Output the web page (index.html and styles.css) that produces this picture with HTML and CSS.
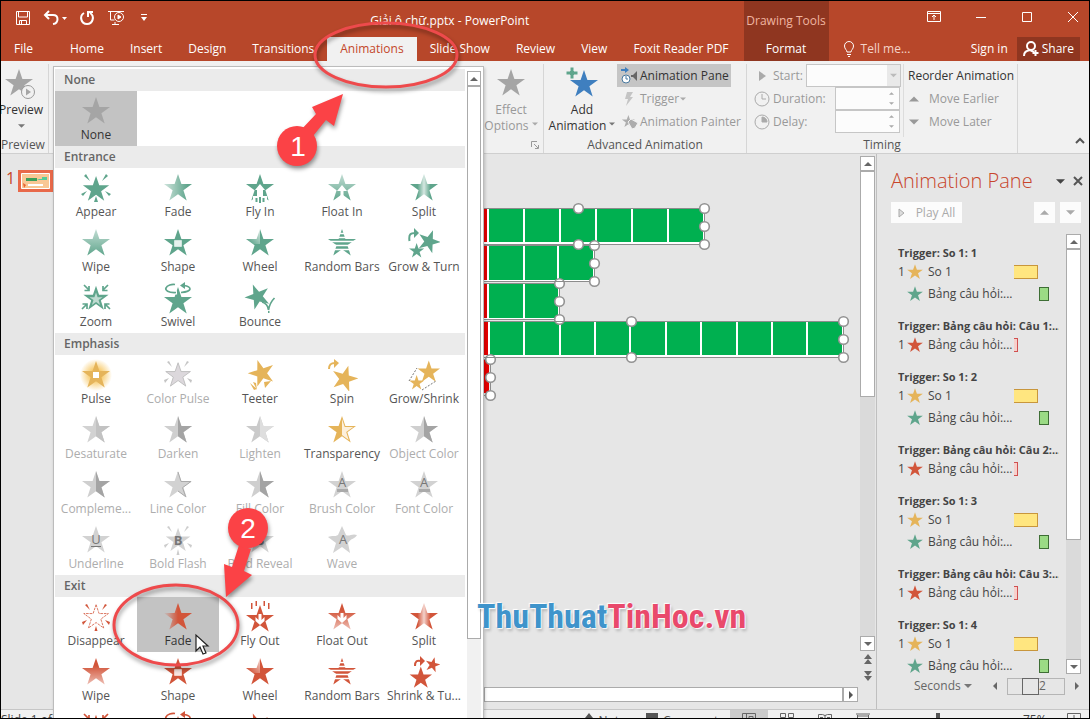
FILE: index.html
```html
<!DOCTYPE html>
<html lang="en">
<head>
<meta charset="utf-8">
<title>Giải ô chữ.pptx - PowerPoint</title>
<link rel="stylesheet" href="styles.css">
</head>
<body>
<svg class="sprite" aria-hidden="true">
  <defs>
    <linearGradient id="g-lr"><stop offset=".1" stop-color="#555"/><stop offset=".8" stop-color="#fff"/></linearGradient>
    <linearGradient id="g-out"><stop offset=".05" stop-color="#000"/><stop offset=".5" stop-color="#fff"/></linearGradient>
    <linearGradient id="g-tb" x2="0" y2="1"><stop offset="0" stop-color="#555"/><stop offset=".9" stop-color="#fff"/></linearGradient>
    <linearGradient id="g-bt" x2="0" y2="1"><stop offset=".3" stop-color="#fff"/><stop offset="1" stop-color="#444"/></linearGradient>
    <linearGradient id="g-split"><stop offset=".3" stop-color="#fff"/><stop offset=".5" stop-color="#444"/><stop offset=".7" stop-color="#fff"/></linearGradient>
    <linearGradient id="g-wheel" x1="0" y1="1" x2="1" y2="0"><stop offset=".2" stop-color="#fff"/><stop offset=".9" stop-color="#444"/></linearGradient>
    <radialGradient id="g-glow"><stop offset=".3" stop-color="#f7c65f"/><stop offset="1" stop-color="#f7c65f" stop-opacity="0"/></radialGradient>
    <mask id="m-lr"><rect width="32" height="32" fill="url(#g-lr)"/></mask>
    <mask id="m-out"><rect width="32" height="32" fill="url(#g-out)"/></mask>
    <mask id="m-tb"><rect width="32" height="32" fill="url(#g-tb)"/></mask>
    <mask id="m-bt"><rect width="32" height="32" fill="url(#g-bt)"/></mask>
    <mask id="m-split"><rect width="32" height="32" fill="url(#g-split)"/></mask>
    <mask id="m-wheel"><rect width="32" height="32" fill="#fff"/><rect width="16" height="17" fill="url(#g-wheel)"/></mask>
    <mask id="m-bars"><rect width="32" height="32" fill="#fff"/><path d="M10 6.500h12M10 10.500h12M0 14.500h32M0 18.500h32M0 22.500h32" stroke="#000" stroke-width="1.300"/></mask>
    <path id="st" d="M16 2l3.400 10H30l-8.600 6.300 3.300 10.200L16 22.200l-8.700 6.300 3.300-10.200L2 12h10.600z"/>
    <path id="half" d="M16 2l3.400 10H30l-8.600 6.300 3.300 10.200L16 22.200z"/>
  </defs>
  <symbol id="i-star" viewBox="0 0 32 32"><use href="#st"/></symbol>
  <symbol id="i-appear" viewBox="0 0 32 32"><use href="#st" transform="translate(1 2) scale(.94)"/><path d="M4 4l2-2 4 7zM28 4l-2-2-4 7zM1 22l6-3-4 5zM31 22l-6-3 4 5zM16 24l2 6h-4z"/></symbol>
  <symbol id="i-fade" viewBox="0 0 32 32"><use href="#st" mask="url(#m-lr)"/></symbol>
  <symbol id="i-fadeout" viewBox="0 0 32 32"><use href="#st" mask="url(#m-out)"/></symbol>
  <symbol id="i-flyin" viewBox="0 0 32 32"><use href="#st"/><path d="M16 12l5 6h-2v6h4v8H9v-8h4v-6h-2z" fill="#fff"/><path d="M11.500 26h2v4h-2zM15 25h2v6h-2zM18.500 26h2v4h-2z"/></symbol>
  <symbol id="i-flyout" viewBox="0 0 32 32"><use href="#st" transform="translate(0 2)"/><path d="M7 2h1.500v6H7zM11.500 0H13v5h-1.500zM19.500 0H21v5h-1.500zM24 2h1.500v6H24z"/><path d="M14.500 13h3v6l3-3v4L16 24l-4.500-4v-4l3 3z" fill="#fff"/></symbol>
  <symbol id="i-floatin" viewBox="0 0 32 32"><use href="#st" mask="url(#m-tb)"/><path d="M16 13l5 6h-3.500v6h-3v-6H11z" fill="#fff"/></symbol>
  <symbol id="i-floatout" viewBox="0 0 32 32"><use href="#st" mask="url(#m-bt)"/><path d="M14.500 12h3v5l3-3v4L16 22l-4.500-4v-4l3 3z" fill="#fff"/></symbol>
  <symbol id="i-split" viewBox="0 0 32 32"><use href="#st" mask="url(#m-split)"/></symbol>
  <symbol id="i-wipe" viewBox="0 0 32 32"><use href="#st" mask="url(#m-tb)"/></symbol>
  <symbol id="i-wipeout" viewBox="0 0 32 32"><use href="#st" mask="url(#m-bt)"/></symbol>
  <symbol id="i-shape" viewBox="0 0 32 32"><use href="#st"/><path d="M12.500 13.500h7v6h-7z" fill="#fff" fill-opacity=".85" stroke="#fff" stroke-opacity=".5"/></symbol>
  <symbol id="i-wheel" viewBox="0 0 32 32"><use href="#st" mask="url(#m-wheel)"/></symbol>
  <symbol id="i-bars" viewBox="0 0 32 32"><use href="#st" mask="url(#m-bars)"/></symbol>
  <symbol id="i-growturn" viewBox="0 0 32 32"><use href="#st" transform="translate(8 1) rotate(20 13 13) scale(.82)"/><use href="#st" transform="translate(0 15) scale(.54)"/><path d="M1.500 14c-1-7 1-8 6-8" fill="none" stroke="currentColor" stroke-width="2"/><path d="M6 1l5 5-5 5z"/></symbol>
  <symbol id="i-shrinkturn" viewBox="0 0 32 32"><use href="#st" transform="translate(0 9) scale(.8)"/><use href="#st" transform="translate(16 0) rotate(14 9 9) scale(.54)"/><path d="M7 10c0-5 2-6 6-5" fill="none" stroke="currentColor" stroke-width="2"/><path d="M12 0l5 5-5 5z"/></symbol>
  <symbol id="i-zoom" viewBox="0 0 32 32"><use href="#st" transform="translate(1.600 2) scale(.9)"/><use href="#st" transform="translate(8.500 9.500) scale(.47)" fill="#fff" fill-opacity=".6"/><path d="M4 3l5 5M9 4v4.500H4.500M28 3l-5 5M23 4v4.500h4.500M2 27l5-5M2.500 22H7v5M30 27l-5-5M29.500 22H25v5" fill="none" stroke="currentColor" stroke-width="1.700"/></symbol>
  <symbol id="i-swivel" viewBox="0 0 32 32"><use href="#st" transform="translate(0 3)"/><path d="M15 10.500C6 11 3 8 4 6c1-3 8-4 13-3M21 10c8-1 9-5 3-6" fill="none" stroke="#fff" stroke-width="4"/><path d="M14 10.500C6 11 3 8 4 6c1-3 6-4 9-3.500M19 10.500c12-1 11-6 3-7" fill="none" stroke="currentColor" stroke-width="1.700"/><path d="M23 0v7l-5-3.500z"/></symbol>
  <symbol id="i-bounce" viewBox="0 0 32 32"><use href="#st" transform="translate(-1 0) rotate(-22 14 14) scale(.9)"/><path d="M18 20c4 1 6 4 6.500 8 1-6 3-9 6-12" fill="none" stroke="currentColor" stroke-width="1.700"/><path d="M24 29h1.500v2H24z"/></symbol>
  <symbol id="i-pulse" viewBox="0 0 32 32"><circle cx="16" cy="16" r="16" fill="url(#g-glow)"/><use href="#st"/><path d="M13 13h6v6h-6z" fill="#fff"/></symbol>
  <symbol id="i-colorpulse" viewBox="0 0 32 32"><use href="#st" fill="#dcd8dc" stroke="#bbb" transform="translate(2 2) scale(.88)"/><path d="M5 3l2-1 3 6zM27 3l-2-1-3 6zM2 21l5-2-4 5zM30 21l-5-2 4 5z"/></symbol>
  <symbol id="i-teeter" viewBox="0 0 32 32"><use href="#st" transform="translate(2 -1) rotate(-18 14 14) scale(.95)"/><path d="M6 24l7 6-3 1zM27 22l-6 7-1-6zM13 31l-1-7-3-1z"/></symbol>
  <symbol id="i-spin" viewBox="0 0 32 32"><use href="#st" transform="translate(4 4) rotate(16 14 14) scale(.94)"/><path d="M3 10c0-5 2-6 6-6" fill="none" stroke="currentColor" stroke-width="2"/><path d="M8 0l5 4-5 5z"/></symbol>
  <symbol id="i-growshrink" viewBox="0 0 32 32"><use href="#st" transform="translate(8 0) scale(.8)"/><use href="#st" transform="translate(0 15) scale(.54)"/><path d="M1 22L9 9M14 31l14-9" stroke="#777" fill="none" stroke-dasharray="2 1.500"/></symbol>
  <symbol id="i-desat" viewBox="0 0 32 32"><use href="#st" fill="#d2d2d2"/><use href="#half" fill="#c2c2c2"/></symbol>
  <symbol id="i-dark" viewBox="0 0 32 32"><use href="#st" fill="#cfcfcf"/><use href="#half" fill="#a4a4a4"/></symbol>
  <symbol id="i-light" viewBox="0 0 32 32"><use href="#st" fill="#cacaca"/><use href="#half" fill="#dedede"/></symbol>
  <symbol id="i-line" viewBox="0 0 32 32"><use href="#st" fill="#d2d2d2"/><path d="M16 3l3 9.500h10l-8.500 6.200 3.200 9L16 22" fill="none" stroke="#aaa"/></symbol>
  <symbol id="i-transp" viewBox="0 0 32 32"><use href="#st"/><path d="M16 5l2.700 8h8.500l-7 5 2.500 8L16 21z" fill="#fdf0dc"/></symbol>
  <symbol id="i-brush" viewBox="0 0 32 32"><use href="#st" fill="#d2d2d2"/><path d="M11 20h11v3H11z" fill="#aaa"/><text x="16" y="18" text-anchor="middle" class="glyph">A</text></symbol>
  <symbol id="i-under" viewBox="0 0 32 32"><use href="#st" fill="#d2d2d2"/><text x="16" y="20" text-anchor="middle" class="glyph">U</text><path d="M11 22h10v1H11z" fill="#777"/></symbol>
  <symbol id="i-flash" viewBox="0 0 32 32"><use href="#st" fill="#d2d2d2" transform="translate(2 2) scale(.88)"/><path d="M5 3l2-1 3 6zM27 3l-2-1-3 6zM2 21l5-2-4 5zM30 21l-5-2 4 5zM16 25l1.500 6h-3z" fill="#ccc"/><text x="16" y="21" text-anchor="middle" class="glyph bold">B</text></symbol>
  <symbol id="i-reveal" viewBox="0 0 32 32"><use href="#st" fill="#d2d2d2"/><text x="16" y="21" text-anchor="middle" class="glyph bold">B</text></symbol>
  <symbol id="i-wave" viewBox="0 0 32 32"><path d="M16 2l4 9c3 2 6-2 11 0-2 4-6 3-9 8l2 10-8-6-9 6 3-10-8-6c4-2 7 0 10-2z" fill="#d2d2d2"/><text x="17" y="20" text-anchor="middle" class="glyph">A</text></symbol>
  <symbol id="i-disappear" viewBox="0 0 32 32"><use href="#st" fill="#fff" stroke="currentColor" stroke-width=".9" stroke-dasharray="3 1" transform="translate(2 2) scale(.88)"/><path d="M5 4l2-1 3 6zM27 4l-2-1-3 6zM2 21l5-2-4 5zM30 21l-5-2 4 5zM16 25l1.500 5h-3z"/></symbol>
  <symbol id="i-down" viewBox="0 0 8 8"><path d="M0 2h8L4 6z"/></symbol>
  <symbol id="i-up" viewBox="0 0 8 8"><path d="M0 6h8L4 2z"/></symbol>
  <symbol id="i-right" viewBox="0 0 8 8"><path d="M2 0v8l4-4z"/></symbol>
  <symbol id="i-left" viewBox="0 0 8 8"><path d="M6 0v8L2 4z"/></symbol>
</svg>

<div class="app">
  <header class="header">
    <div class="header-main">
      <div class="titlebar">
        <div class="qat">
          <button aria-label="Save"><svg width="16" height="16" viewBox="0 0 16 16" class="line"><path d="M1.500 1.500h13v13h-13zM3.500 2v5h9V2M4.500 14.500v-4h7v4M6.500 11v3"/></svg></button>
          <button aria-label="Undo"><svg width="24" height="16" viewBox="0 0 24 16" class="line thick"><path d="M2 5h8c6 0 6 8 0 9M6 1L2 5l4 4"/><path d="M19 7h5l-2.500 3z" fill="#fff" stroke="none"/></svg></button>
          <button aria-label="Redo"><svg width="16" height="16" viewBox="0 0 16 16" class="line thick"><path d="M5 3C0 6 2 14 8 14s8-8 3-11M9 7V2h5"/></svg></button>
          <button aria-label="Start from beginning"><svg width="18" height="16" viewBox="0 0 18 16" class="line"><path d="M1 1.500h16M3.500 2v8h4M8 12v2M5 14.500h7"/><circle cx="12" cy="7" r="4.500"/><path d="M11 5l3 2-3 2z" fill="#fff"/></svg></button>
          <button class="customize" aria-label="Customize Quick Access Toolbar"><svg width="8" height="8" viewBox="0 0 8 8"><path d="M1 0h6v1H1zM1 3h6L4 7z"/></svg></button>
        </div>
        <h1 class="doc-title">Giải ô chữ.pptx - PowerPoint</h1>
      </div>
      <nav class="tabs">
        <button class="tab file">File</button><button class="tab">Home</button><button class="tab">Insert</button><button class="tab">Design</button><button class="tab">Transitions</button><button class="tab active">Animations</button><button class="tab">Slide Show</button><button class="tab">Review</button><button class="tab">View</button><button class="tab">Foxit Reader PDF</button>
      </nav>
    </div>
    <div class="context">
      <span class="context-title">Drawing Tools</span>
      <button class="tab">Format</button>
    </div>
    <div class="header-side">
      <div class="window-controls">
        <button aria-label="Ribbon Display Options"><svg width="14" height="12" viewBox="0 0 14 12" class="line"><path d="M.5.500h13v10H.5zM.5 2.500h13M7 9V4M5 6l2-2 2 2"/></svg></button>
        <button aria-label="Minimize"><svg width="12" height="12" viewBox="0 0 12 12" class="line"><path d="M1 6.500h10"/></svg></button>
        <button aria-label="Restore"><svg width="12" height="12" viewBox="0 0 12 12" class="line"><path d="M1.500 1.500h9v9h-9z"/></svg></button>
        <button aria-label="Close"><svg width="12" height="12" viewBox="0 0 12 12" class="line"><path d="M1 1l10 10M11 1L1 11"/></svg></button>
      </div>
      <div class="account">
        <button class="tell"><svg width="12" height="16" viewBox="0 0 12 16" class="line"><path d="M4 11c0-2-2.500-3-2.500-6a4.500 4.500 0 019 0c0 3-2.500 4-2.500 6zM4 13.500h4M5 15.500h2"/></svg>Tell me...</button>
        <button class="signin">Sign in</button>
        <button class="share"><svg width="16" height="16" viewBox="0 0 16 16" class="line share-icon"><circle cx="8" cy="5" r="4"/><path d="M1 15c0-4 2-5 6-6l4 2M12.500 9v6M9.500 12h6"/></svg>Share</button>
      </div>
    </div>
  </header>

  <section class="ribbon">
    <div class="group preview">
      <div class="group-body">
        <button class="big"><svg width="32" height="32" viewBox="0 0 32 32" class="gray"><use href="#st" transform="translate(-2 0)"/><circle cx="23" cy="25" r="6.500" fill="#f1f1f1" stroke="#999"/><path d="M21 21.500v7l5-3.500z"/></svg><span>Preview</span><svg class="caret" width="7" height="16"><use href="#i-down" width="7" height="16"/></svg></button>
      </div>
      <div class="group-label">Preview</div>
    </div>
    <div class="group slot">
      <div class="gallery">
        <div class="gallery-list">
          <h2>None</h2>
          <div class="grid gray"><button class="fx on"><svg><use href="#i-star"/></svg><span>None</span></button></div>
          <h2>Entrance</h2>
          <div class="grid green">
            <button class="fx"><svg><use href="#i-appear"/></svg><span>Appear</span></button>
            <button class="fx"><svg><use href="#i-fade"/></svg><span>Fade</span></button>
            <button class="fx"><svg><use href="#i-flyin"/></svg><span>Fly In</span></button>
            <button class="fx"><svg><use href="#i-floatin"/></svg><span>Float In</span></button>
            <button class="fx"><svg><use href="#i-split"/></svg><span>Split</span></button>
            <button class="fx"><svg><use href="#i-wipe"/></svg><span>Wipe</span></button>
            <button class="fx"><svg><use href="#i-shape"/></svg><span>Shape</span></button>
            <button class="fx"><svg><use href="#i-wheel"/></svg><span>Wheel</span></button>
            <button class="fx"><svg><use href="#i-bars"/></svg><span>Random Bars</span></button>
            <button class="fx"><svg><use href="#i-growturn"/></svg><span>Grow &amp; Turn</span></button>
            <button class="fx"><svg><use href="#i-zoom"/></svg><span>Zoom</span></button>
            <button class="fx"><svg><use href="#i-swivel"/></svg><span>Swivel</span></button>
            <button class="fx"><svg><use href="#i-bounce"/></svg><span>Bounce</span></button>
          </div>
          <h2>Emphasis</h2>
          <div class="grid gold">
            <button class="fx"><svg><use href="#i-pulse"/></svg><span>Pulse</span></button>
            <button class="fx" disabled><svg><use href="#i-colorpulse"/></svg><span>Color Pulse</span></button>
            <button class="fx"><svg><use href="#i-teeter"/></svg><span>Teeter</span></button>
            <button class="fx"><svg><use href="#i-spin"/></svg><span>Spin</span></button>
            <button class="fx"><svg><use href="#i-growshrink"/></svg><span>Grow/Shrink</span></button>
            <button class="fx" disabled><svg><use href="#i-desat"/></svg><span>Desaturate</span></button>
            <button class="fx" disabled><svg><use href="#i-dark"/></svg><span>Darken</span></button>
            <button class="fx" disabled><svg><use href="#i-light"/></svg><span>Lighten</span></button>
            <button class="fx"><svg><use href="#i-transp"/></svg><span>Transparency</span></button>
            <button class="fx" disabled><svg><use href="#i-dark"/></svg><span>Object Color</span></button>
            <button class="fx" disabled><svg><use href="#i-dark"/></svg><span>Compleme...</span></button>
            <button class="fx" disabled><svg><use href="#i-line"/></svg><span>Line Color</span></button>
            <button class="fx" disabled><svg><use href="#i-dark"/></svg><span>Fill Color</span></button>
            <button class="fx" disabled><svg><use href="#i-brush"/></svg><span>Brush Color</span></button>
            <button class="fx" disabled><svg><use href="#i-brush"/></svg><span>Font Color</span></button>
            <button class="fx" disabled><svg><use href="#i-under"/></svg><span>Underline</span></button>
            <button class="fx" disabled><svg><use href="#i-flash"/></svg><span>Bold Flash</span></button>
            <button class="fx" disabled><svg><use href="#i-reveal"/></svg><span>Bold Reveal</span></button>
            <button class="fx" disabled><svg><use href="#i-wave"/></svg><span>Wave</span></button>
          </div>
          <h2>Exit</h2>
          <div class="grid red">
            <button class="fx"><svg><use href="#i-disappear"/></svg><span>Disappear</span></button>
            <button class="fx on"><svg><use href="#i-fadeout"/></svg><span>Fade</span></button>
            <button class="fx"><svg><use href="#i-flyout"/></svg><span>Fly Out</span></button>
            <button class="fx"><svg><use href="#i-floatout"/></svg><span>Float Out</span></button>
            <button class="fx"><svg><use href="#i-split"/></svg><span>Split</span></button>
            <button class="fx"><svg><use href="#i-wipeout"/></svg><span>Wipe</span></button>
            <button class="fx"><svg><use href="#i-shape"/></svg><span>Shape</span></button>
            <button class="fx"><svg><use href="#i-wheel"/></svg><span>Wheel</span></button>
            <button class="fx"><svg><use href="#i-bars"/></svg><span>Random Bars</span></button>
            <button class="fx"><svg><use href="#i-shrinkturn"/></svg><span>Shrink &amp; Tu...</span></button>
            <button class="fx" aria-label="Zoom"><svg><use href="#i-zoom"/></svg></button>
            <button class="fx" aria-label="Swivel"><svg><use href="#i-swivel"/></svg></button>
            <button class="fx" aria-label="Bounce"><svg><use href="#i-bounce"/></svg></button>
          </div>
        </div>
        <div class="scroll gallery-scroll"><button aria-label="Scroll up"><svg width="8" height="8"><use href="#i-up"/></svg></button><div class="thumb"></div></div>
      </div>
    </div>
    <div class="group effect">
      <div class="group-body">
        <button class="big" disabled><svg width="32" height="32" class="gray"><use href="#i-star"/></svg><span>Effect</span><span>Options <svg class="caret" width="6" height="6"><use href="#i-down"/></svg></span></button>
      </div>
      <div class="group-label launcher"><svg width="8" height="8" viewBox="0 0 8 8"><path d="M.5 6V.500H6M3 3l4 4M7.500 4v3.500H4" fill="none" stroke="#999"/></svg></div>
    </div>
    <div class="group advanced">
      <div class="group-body">
        <button class="big"><svg width="32" height="32" viewBox="0 0 32 32"><use href="#st" fill="#3f7fbf" transform="translate(2 1)"/><path d="M4 0h4v4h4v4H8v4H4V8H0V4h4z" fill="#5fa58c" stroke="#f1f1f1"/></svg><span>Add</span><span>Animation <svg class="caret" width="6" height="6"><use href="#i-down"/></svg></span></button>
        <div class="rows">
          <button class="row pressed"><svg width="18" height="18" viewBox="0 0 18 18"><circle cx="5" cy="12" r="4" fill="#fff" stroke="#49799f"/><path d="M5 9v3h2" fill="none" stroke="#49799f"/><path d="M0 2h4V0l4 3-4 3V4H0z" fill="#3f7fbf"/><path d="M10 8h2l4-4v10l-4-4h-2z" fill="#666"/></svg>Animation Pane</button>
          <button class="row" disabled><svg width="18" height="18" viewBox="0 0 18 18"><path d="M6 2h6L9 7h3l-7 9 2-7H4z" fill="#c4c4c4"/></svg>Trigger <svg class="caret" width="6" height="6"><use href="#i-down"/></svg></button>
          <button class="row" disabled><svg width="18" height="18" viewBox="0 0 18 18"><g fill="#adadad"><use href="#st" transform="translate(0 1) scale(.46)"/><path d="M7 9l3-3 7 4-3 5-3 1z" stroke="#f1f1f1"/></g></svg>Animation Painter</button>
        </div>
      </div>
      <div class="group-label">Advanced Animation</div>
    </div>
    <div class="group timing">
      <div class="group-body">
        <div class="fields">
          <div class="field"><svg width="16" height="16" viewBox="0 0 16 16"><path d="M5 3v10l7-5z" fill="#aaa"/></svg><label for="start">Start:</label><span class="box wide"><select id="start" disabled><option></option></select><svg class="drop" width="6" height="6"><use href="#i-down"/></svg></span></div>
          <div class="field"><svg class="clock" width="16" height="16" viewBox="0 0 16 16"><circle cx="8" cy="8" r="7"/><path d="M8 3v5h4"/></svg><label for="duration">Duration:</label><span class="box"><input id="duration" disabled><span class="spin"><svg width="5" height="5"><use href="#i-up"/></svg><svg width="5" height="5"><use href="#i-down"/></svg></span></span></div>
          <div class="field"><svg class="clock" width="16" height="16" viewBox="0 0 16 16"><circle cx="8" cy="8" r="7"/><path d="M8 3v5h5a5 5 0 00-5-5z" fill="#aaa"/></svg><label for="delay">Delay:</label><span class="box"><input id="delay" disabled><span class="spin"><svg width="5" height="5"><use href="#i-up"/></svg><svg width="5" height="5"><use href="#i-down"/></svg></span></span></div>
        </div>
        <div class="reorder">
          <span class="row">Reorder Animation</span>
          <button class="row" disabled><svg width="10" height="10"><use href="#i-up"/></svg>Move Earlier</button>
          <button class="row" disabled><svg width="10" height="10"><use href="#i-down"/></svg>Move Later</button>
        </div>
      </div>
      <div class="group-label">Timing</div>
    </div>
    <button class="collapse" aria-label="Collapse the Ribbon"><svg width="10" height="8" viewBox="0 0 10 8"><path d="M1 6l4-4 4 4" fill="none" stroke="#555" stroke-width="2"/></svg></button>
  </section>

  <main class="workspace">
    <aside class="slides">
      <span class="slide-no">1</span>
      <svg width="36" height="22" viewBox="0 0 36 22"><path d="M0 0h36v22H0z" fill="#e8694a"/><path d="M3.500 3.500h28v15h-28z" fill="#f9c795" stroke="#fff"/><path d="M8 8h11v3H8z" fill="#3ba05a"/><path d="M19 9h5V7h5v3h-8z" fill="#5c9"/><path d="M10 14h15v2H10z" fill="#fff"/><path d="M5 13l3 2-2 3z" fill="#e86030"/></svg>
    </aside>
    <div class="stage">
      <div class="canvas">
        <svg class="shapes" width="380" height="250" viewBox="484 154 380 250">
          <g fill="#fff"><path d="M484 208h220v36H484zM484 245h110v36H484zM484 283h75v36H484zM484 321h359v36H484z"/></g>
          <g fill="#e60000"><path d="M484 209h3v33h-3zM484 246h3v34h-3zM484 284h3v34h-3zM484 322h4v33h-4zM484 359h5v34h-5z"/></g>
          <g fill="#00b050"><path d="M489 209h34v33h-34zM525 209h34v33h-34zM561 209h34v33h-34zM597 209h34v33h-34zM633 209h34v33h-34zM669 209h34v33h-34z"/><path d="M489 246h34v34h-34zM525 246h32v34h-32zM559 246h34v34h-34z"/><path d="M489 284h34v34h-34zM525 284h33v34h-33z"/><path d="M490 322h33v33h-33zM525 322h34v33h-34zM561 322h33v33h-33zM596 322h33v33h-33zM631 322h34v33h-34zM667 322h33v33h-33zM702 322h34v33h-34zM738 322h33v33h-33zM773 322h33v33h-33zM808 322h34v33h-34z"/></g>
          <path d="M484 208.500h220.500v36H484M484 245.500h110.500v36H484M484 283.500h75.500v36H484M484 321.500h359.500v36H484M484 359.500h6.500v36H484" fill="none" stroke="#8c8c8c"/>
          <g fill="#fff" stroke="#929292" stroke-width="1.600"><circle cx="578.500" cy="208.500" r="4.800"/><circle cx="578.500" cy="244.500" r="4.800"/><circle cx="704.500" cy="208.500" r="4.800"/><circle cx="704.500" cy="226.500" r="4.800"/><circle cx="704.500" cy="244.500" r="4.800"/><circle cx="594.500" cy="245.500" r="4.800"/><circle cx="594.500" cy="263.500" r="4.800"/><circle cx="594.500" cy="281.500" r="4.800"/><circle cx="559.500" cy="283.500" r="4.800"/><circle cx="559.500" cy="301.500" r="4.800"/><circle cx="559.500" cy="319.500" r="4.800"/><circle cx="631.500" cy="321.500" r="4.800"/><circle cx="631.500" cy="357.500" r="4.800"/><circle cx="843.500" cy="321.500" r="4.800"/><circle cx="843.500" cy="339.500" r="4.800"/><circle cx="843.500" cy="357.500" r="4.800"/><circle cx="490.500" cy="359.500" r="4.800"/><circle cx="490.500" cy="377.500" r="4.800"/><circle cx="490.500" cy="395.500" r="4.800"/></g>
          <path d="M590 244.500h9M554 281.500h10M554 321.500h10M484 357.500h11" stroke="#8c8c8c"/>
        </svg>
      </div>
      <div class="hscroll"><div class="hthumb"></div><button aria-label="Scroll right"><svg width="8" height="8"><use href="#i-right"/></svg></button></div>
    </div>
    <div class="vbar">
      <div class="scroll vscroll"><button aria-label="Scroll up"><svg width="8" height="8"><use href="#i-up"/></svg></button><div class="thumb"></div><div class="track"></div><button aria-label="Scroll down"><svg width="8" height="8"><use href="#i-down"/></svg></button></div>
      <button class="jump" aria-label="Previous Slide"><svg width="10" height="10" viewBox="0 0 10 10"><path d="M1 5h8L5 0zM1 10h8L5 5z"/></svg></button>
      <button class="jump" aria-label="Next Slide"><svg width="10" height="10" viewBox="0 0 10 10"><path d="M1 0h8L5 5zM1 5h8l-4 5z"/></svg></button>
    </div>
    <aside class="pane">
      <div class="pane-head"><h2>Animation Pane</h2><button aria-label="Task Pane Options"><svg width="9" height="9"><use href="#i-down"/></svg></button><button aria-label="Close"><svg width="10" height="10" viewBox="0 0 10 10"><path d="M1 1l8 8M9 1L1 9" stroke="#555" stroke-width="2"/></svg></button></div>
      <div class="pane-tools"><button class="play" disabled><svg width="8" height="10" viewBox="0 0 8 10"><path d="M1 1v8l5-4z" fill="#ddd" stroke="#aaa"/></svg>Play All</button><button class="move" aria-label="Move up" disabled><svg width="9" height="9"><use href="#i-up"/></svg></button><button class="move" aria-label="Move down" disabled><svg width="9" height="9"><use href="#i-down"/></svg></button></div>
      <div class="pane-body">
        <div class="effects">
          <section><h3>Trigger: So 1: 1</h3>
            <div class="effect-row"><span>1</span><svg class="gold"><use href="#i-star"/></svg><span>So 1</span><i class="bar yellow"></i></div>
            <div class="effect-row"><span></span><svg class="green"><use href="#i-star"/></svg><span>Bảng câu hỏi:...</span><i class="bar lime"></i></div></section>
          <section><h3>Trigger: Bảng câu hỏi: Câu 1:...</h3>
            <div class="effect-row"><span>1</span><svg class="red"><use href="#i-star"/></svg><span>Bảng câu hỏi:...</span><i class="bar rose"></i></div></section>
          <section><h3>Trigger: So 1: 2</h3>
            <div class="effect-row"><span>1</span><svg class="gold"><use href="#i-star"/></svg><span>So 1</span><i class="bar yellow"></i></div>
            <div class="effect-row"><span></span><svg class="green"><use href="#i-star"/></svg><span>Bảng câu hỏi:...</span><i class="bar lime"></i></div></section>
          <section><h3>Trigger: Bảng câu hỏi: Câu 2:...</h3>
            <div class="effect-row"><span>1</span><svg class="red"><use href="#i-star"/></svg><span>Bảng câu hỏi:...</span><i class="bar rose"></i></div></section>
          <section><h3>Trigger: So 1: 3</h3>
            <div class="effect-row"><span>1</span><svg class="gold"><use href="#i-star"/></svg><span>So 1</span><i class="bar yellow"></i></div>
            <div class="effect-row"><span></span><svg class="green"><use href="#i-star"/></svg><span>Bảng câu hỏi:...</span><i class="bar lime"></i></div></section>
          <section><h3>Trigger: Bảng câu hỏi: Câu 3:...</h3>
            <div class="effect-row"><span>1</span><svg class="red"><use href="#i-star"/></svg><span>Bảng câu hỏi:...</span><i class="bar rose"></i></div></section>
          <section><h3>Trigger: So 1: 4</h3>
            <div class="effect-row"><span>1</span><svg class="gold"><use href="#i-star"/></svg><span>So 1</span><i class="bar yellow"></i></div>
            <div class="effect-row"><span></span><svg class="green"><use href="#i-star"/></svg><span>Bảng câu hỏi:...</span><i class="bar lime"></i></div></section>
        </div>
        <div class="scroll pane-scroll"><button aria-label="Scroll up"><svg width="8" height="8"><use href="#i-up"/></svg></button><div class="thumb"></div><div class="track"></div><button aria-label="Scroll down"><svg width="8" height="8"><use href="#i-down"/></svg></button></div>
      </div>
      <div class="timeline"><button>Seconds <svg class="caret" width="8" height="8"><use href="#i-down"/></svg></button><svg width="8" height="8"><use href="#i-left"/></svg><div class="ruler"><span class="knob"></span><span>2</span></div><svg width="8" height="8"><use href="#i-right"/></svg></div>
    </aside>
  </main>

  <footer class="status">
    <div class="status-inner">
      <span class="slide-count">Slide 1 of 1</span>
      <button class="notes"><svg width="10" height="12" viewBox="0 0 10 12"><path d="M1 5h8L5 0zM0 7h10v1H0z"/></svg>Notes</button>
      <button class="comments"><svg width="12" height="12" viewBox="0 0 12 12"><path d="M0 0h12v9H6l-3 3V9H0z"/></svg>Comments</button>
      <button class="view on" aria-label="Normal"><svg width="14" height="12" viewBox="0 0 14 12"><path d="M.5.500h13v11H.5zM4.500 1v10M7 3.500h4v4H7z"/></svg></button>
      <button class="view" aria-label="Slide Sorter"><svg width="14" height="12" viewBox="0 0 14 12"><path d="M.5.500h5v4h-5zM8.500.500h5v4h-5zM.5 7.500h5v4h-5zM8.500 7.500h5v4h-5z"/></svg></button>
      <button class="view" aria-label="Reading View"><svg width="14" height="12" viewBox="0 0 14 12"><path d="M.5 1.500h4l2.500 1 2.500-1h4v9h-13zM7 2v9M2 4.500h3M9 4.500h3M2 6.500h3"/></svg></button>
      <button class="view" aria-label="Slide Show"><svg width="14" height="12" viewBox="0 0 14 12"><path d="M0 1h14M1.500 2v6h11V2M7 8v4M2 3h10"/></svg></button>
      <label class="zoom"><input type="range" min="0" max="100" value="38" aria-label="Zoom"></label>
      <span class="percent">75%</span>
      <button class="fit" aria-label="Fit slide"><svg width="14" height="12" viewBox="0 0 14 12"><path d="M.5.500h13v11H.5zM7 2v8M3 6h8"/></svg></button>
    </div>
  </footer>

  <div class="watermark"><span class="wm-blue">ThuThuat</span><span class="wm-pink">TinHoc.vn</span></div>
  <svg class="callouts" width="484" height="718" viewBox="0 0 484 718">
    <g class="shadowed"><ellipse cx="386" cy="55" rx="71" ry="32" class="ring"/><ellipse cx="176" cy="625" rx="62" ry="40" class="ring"/></g>
    <g class="shadowed" fill="#fb4246"><path d="M343 94l-9 32-8-6-17 21-10-9 17-18-4-7z"/><circle cx="297" cy="146" r="20"/><path d="M226 597l-2-33 8 3 7-22 12 4-7 22 8 4z"/><circle cx="248" cy="528" r="20"/></g>
    <g class="digits"><text x="298" y="156">1</text><text x="248" y="538">2</text></g>
    <path d="M196 635v16l4-4 3 7 3-1-3-7h5z" fill="#fff" stroke="#222" stroke-width="1.200"/>
  </svg>
</div>
</body>
</html>
```
FILE: styles.css
```css
* { box-sizing: border-box; }
html, body { height: 100%; }
body { margin: 0; font: 12px/16px "Open Sans", "Noto Sans", sans-serif; color: #444; }
h1, h2, h3 { margin: 0; font: inherit; }
button { margin: 0; padding: 0; border: 0; background: none; font: inherit; color: inherit; text-align: center; white-space: nowrap; }
svg { flex: none; fill: currentColor; }
.sprite { position: absolute; width: 0; height: 0; }
.line { fill: none; stroke: #fff; }
.thick { stroke-width: 2; }
.clock { fill: none; stroke: #aaa; }
.gray { color: #a5a5a5; }
.green { color: #5fa58c; }
.gold { color: #e5b45a; }
.red { color: #d2553a; }
.glyph { font: 13px "Open Sans", sans-serif; fill: #777; }
.bold { font-weight: 700; }

.app { position: relative; display: flex; flex-direction: column; height: 100vh; border: 1px solid #000; overflow: hidden; background: #e6e6e6; }

/* Title bar and tabs */
.header { flex: none; display: flex; height: 60px; background: #b7472a; color: #fff; }
.header-main { flex: 0 0 740px; display: flex; flex-direction: column; }
.titlebar { flex: 1; display: flex; align-items: center; }
.qat { display: flex; align-items: center; gap: 12px; width: 155px; padding: 0 0 3px 14px; }
.qat button { display: flex; }
.qat .customize { margin-left: 3px; }
.doc-title { flex: 1; padding-top: 4px; text-align: center; }
.tabs { display: flex; justify-content: space-between; height: 24px; padding-right: 2px; }
.tab { height: 24px; padding: 0 13px; line-height: 24px; }
.tab.file { width: 56px; text-align: left; }
.tab.active { background: #f1f1f1; color: #c4472a; }
.context { flex: 0 0 85px; display: flex; flex-direction: column; justify-content: space-between; background: #8f3620; text-align: center; }
.context-title { padding-top: 12px; color: #f0b5a0; white-space: nowrap; }
.header-side { flex: 1; display: flex; flex-direction: column; justify-content: space-between; }
.window-controls { display: flex; justify-content: flex-end; gap: 34px; padding: 10px 10px 0 0; }
.window-controls button { display: flex; }
.account { display: flex; height: 24px; padding-right: 9px; }
.account button { display: flex; align-items: center; }
.tell { gap: 6px; padding-left: 14px; color: #f4d3c8; }
.account .signin { margin-left: auto; padding: 0 9px; }
.account .share { gap: 3px; padding: 0 6px; background: #8f3620; }
.share-icon { stroke-width: 2; }

/* Ribbon */
.ribbon { flex: none; display: flex; height: 93px; padding-top: 3px; border-bottom: 1px solid #cfcfcf; background: #f1f1f1; }
.group { display: flex; flex-direction: column; border-right: 1px solid #d6d6d6; }
.group-body { flex: 1; display: flex; }
.group-label { height: 16px; text-align: center; white-space: nowrap; color: #555; }
.preview { width: 48px; }
.preview .group-label { width: 40px; }
.preview .big { width: 40px; }
.slot { position: relative; width: 435px; border: 0; }
.effect { width: 60px; }
.effect .big { width: 54px; }
.advanced { width: 203px; }
.advanced .big { width: 73px; padding-left: 3px; }
.timing { width: 271px; }
.big { display: flex; flex-direction: column; align-items: center; padding-top: 3px; color: #333; }
.big svg:first-child { margin-bottom: 3px; }
button:disabled { color: #999; }
.caret { color: #777; }
button:disabled .caret { color: #aaa; }
.launcher { text-align: right; padding-right: 4px; }
.rows, .reorder { display: flex; flex-direction: column; align-items: flex-start; }
.row { display: flex; align-items: center; height: 23px; padding: 0 4px; gap: 1px; color: #333; white-space: nowrap; }
.row.pressed { background: #c5c5c5; padding-right: 2px; }
.fields { width: 157px; padding: 0 3px 0 7px; border-right: 1px solid #dcdcdc; }
.field { display: flex; align-items: center; height: 23px; gap: 3px; color: #999; }
.box { position: relative; flex: none; display: flex; width: 65px; height: 23px; margin-left: auto; border: 1px solid #c6c6c6; background: #fcfcfc; }
.box.wide { width: 95px; }
.box input, .box select { width: 100%; min-width: 0; border: 0; padding: 0 4px; background: transparent; font: inherit; appearance: none; }
.drop { position: absolute; right: 0; top: 0; width: 13px; height: 21px; padding: 7px 3px; background: #e9e9e9; color: #bbb; }
.spin { display: flex; flex-direction: column; justify-content: space-around; padding-right: 5px; color: #aaa; }
.reorder .row { gap: 10px; padding: 0 5px; }
.reorder span.row { padding: 0 4px; }
.reorder button:disabled, .rows button:disabled { color: #999; }
.collapse { margin: auto 4px 4px auto; }

/* Effect gallery */
.gallery { position: absolute; top: 2px; left: 4px; z-index: 2; display: flex; width: 431px; padding: 2px 2px 0 1px; border: 1px solid #bcbcbc; background: #fff; box-shadow: 1px 2px 3px #0003; }
.gallery-list { flex: none; width: 410px; }
.gallery h2 { height: 22px; padding-left: 9px; background: #ebebeb; font-weight: 600; line-height: 22px; color: #666; }
.grid { display: grid; grid-template-columns: repeat(5, 82px); grid-auto-rows: 55px; }
.fx { display: flex; flex-direction: column; align-items: center; padding-top: 4px; }
.fx svg { width: 32px; height: 32px; }
.fx span { color: #555; }
.fx.on { background: #c3c3c3; }
.fx.on span { color: #333; }
.fx:disabled { color: #c4c4c4; }
.fx:disabled span { color: #adadad; }

/* Scroll bars */
.scroll { display: flex; flex-direction: column; width: 15px; color: #666; }
.scroll button { display: flex; align-items: center; justify-content: center; height: 15px; border: 1px solid #ababab; background: #fff; }
.thumb { border: 1px solid #ababab; background: #fff; }
.track { flex: 1; background: #dadada; }
.gallery-scroll { margin: 2px 0 0 2px; background: #f1f1f1; }
.gallery-scroll .thumb { height: 553px; }
.vscroll { flex: 1; }
.vscroll .thumb { height: 226px; }
.pane-scroll { flex: none; }
.pane-scroll .thumb { height: 291px; }

/* Workspace */
.workspace { flex: 1; display: flex; min-height: 0; }
.slides { flex: 0 0 483px; display: flex; gap: 3px; padding: 16px 0 0 5px; color: #c8452b; font-size: 16px; }
.stage { flex: 1; display: flex; flex-direction: column; min-width: 0; }
.canvas { flex: 1; min-height: 0; overflow: hidden; }
.shapes { display: block; }
.hscroll { display: flex; height: 15px; margin: 0 2px 7px 0; color: #555; }
.hthumb { flex: 1; border: 1px solid #ababab; background: #fff; }
.hscroll button { display: flex; align-items: center; justify-content: center; width: 15px; border: 1px solid #ababab; background: #fff; }
.vbar { display: flex; flex-direction: column; width: 17px; padding: 2px 1px 24px 0; border-right: 1px solid #bfbfbf; color: #666; }
.jump { height: 17px; line-height: 17px; }

/* Animation pane */
.pane { flex: 0 0 212px; display: flex; flex-direction: column; padding: 14px 8px 11px 14px; }
.pane-head { display: flex; align-items: center; gap: 8px; height: 26px; margin-right: -2px; }
.pane-head h2 { flex: 1; font-size: 20px; font-weight: 300; line-height: 26px; color: #c8452b; white-space: nowrap; }
.pane-head button { display: flex; }
.pane-tools { display: flex; gap: 5px; height: 21px; margin: 8px 0 11px; }
.pane-tools button { display: flex; align-items: center; justify-content: center; background: #fcfcfc; color: #aaa; }
.play { gap: 10px; width: 71px; margin-right: auto; }
.move { width: 21px; }
.pane-body { flex: 1; display: flex; justify-content: space-between; min-height: 0; }
.effects { width: 168px; padding: 11px 0 0 7px; overflow: hidden; }
.effects section { margin-bottom: 13px; }
.effects h3 { font-size: 11px; font-weight: 700; white-space: nowrap; }
.effect-row { display: grid; grid-template-columns: 8px 18px 84px auto; align-items: center; height: 22px; white-space: nowrap; }
.effect-row svg { width: 18px; height: 18px; }
.effect-row span + svg + span { padding-left: 4px; }
.bar { height: 14px; margin-left: 6px; }
.yellow { width: 24px; border: 1px solid #c8963c; border-left: 0; background: #ffe680; }
.lime { width: 10px; margin-left: 31px; border: 1px solid #3e6e35; background: #9bdb85; }
.rose { width: 4px; border: 1px solid #d05050; border-left: 0; background: #f7d0cc; }
.timeline { display: flex; align-items: center; gap: 8px; height: 24px; padding-left: 23px; color: #666; }
.timeline button { margin-right: auto; }
.ruler { display: flex; align-items: center; width: 58px; height: 17px; padding-left: 14px; border: 1px solid #b5b5b5; }
.knob { width: 17px; height: 17px; border: 1px solid #666; }

/* Status bar */
.status { flex: 0 0 9px; overflow: hidden; border-top: 1px solid #c6c6c6; background: #f1f1f1; }
.status-inner { display: flex; align-items: flex-start; height: 22px; }
.status-inner button { display: flex; justify-content: center; gap: 5px; height: 22px; padding-top: 3px; color: #555; }
.slide-count { width: 574px; padding-top: 2px; }
.notes { width: 65px; }
.comments { width: 90px; }
.view { width: 38px; }
.view svg, .fit svg { fill: none; stroke: #666; }
.status-inner .view.on { background: #cbcbcb; }
.zoom { flex: 1; padding: 0 10px; }
.zoom input { width: 100%; height: 16px; margin: 0; appearance: none; background: linear-gradient(#999, #999) center / 100% 1px no-repeat; }
.zoom input::-webkit-slider-thumb { appearance: none; width: 4px; height: 10px; background: #555; }
.percent { width: 36px; padding-top: 2px; }
.fit { width: 30px; }

/* Annotations */
.watermark { position: absolute; left: 476px; top: 593px; z-index: 3; font: 700 34px/44px "Liberation Sans Narrow", "Roboto Condensed", "Open Sans Condensed", sans-serif; white-space: nowrap; text-shadow: 1px 1px 1px #fff, -1px -1px 1px #fff, 2px 3px 3px #0003; }
.wm-blue { color: #3f94cb; }
.wm-pink { color: #e9496b; }
.callouts { position: absolute; left: -1px; top: -1px; z-index: 4; pointer-events: none; }
.shadowed { filter: drop-shadow(1px 3px 2px #0006); }
.ring { fill: none; stroke: #ee4a4c; stroke-width: 3; }
.digits { font: 28px "Liberation Sans", sans-serif; text-anchor: middle; fill: #fff; }
```
